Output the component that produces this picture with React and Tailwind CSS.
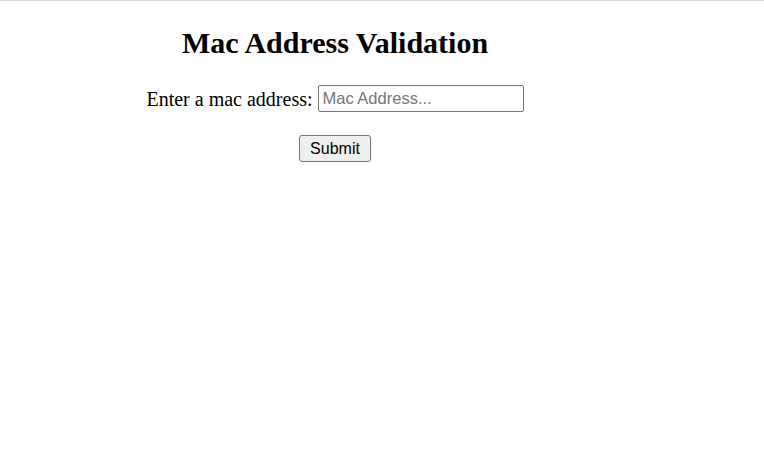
export default function App() {
  return (
    <div className="min-h-screen bg-white border-t border-[#d9d9de]">
      <div className="w-[670px] flex flex-col items-center">
        <h1 className="mt-[25px] text-[30px] leading-[34px] font-bold text-black font-['Liberation_Serif',serif]">
          Mac Address Validation
        </h1>
        <div className="mt-[25px] flex items-center gap-[5px]">
          <label className="text-[20px] leading-[24px] text-black font-['Liberation_Serif',serif]">
            Enter a mac address:
          </label>
          <input
            type="text"
            placeholder="Mac Address..."
            className="w-[206px] h-[27px] px-[4px] border border-[#767676] rounded-[2px] text-[16.5px] text-black placeholder:text-[#757575] font-['Liberation_Sans',sans-serif] outline-none"
          />
        </div>
        <button className="mt-[23px] h-[27px] px-[10px] bg-[#efefef] border border-[#767676] rounded-[3px] text-[16px] text-black font-['Liberation_Sans',sans-serif]">
          Submit
        </button>
      </div>
    </div>
  );
}
